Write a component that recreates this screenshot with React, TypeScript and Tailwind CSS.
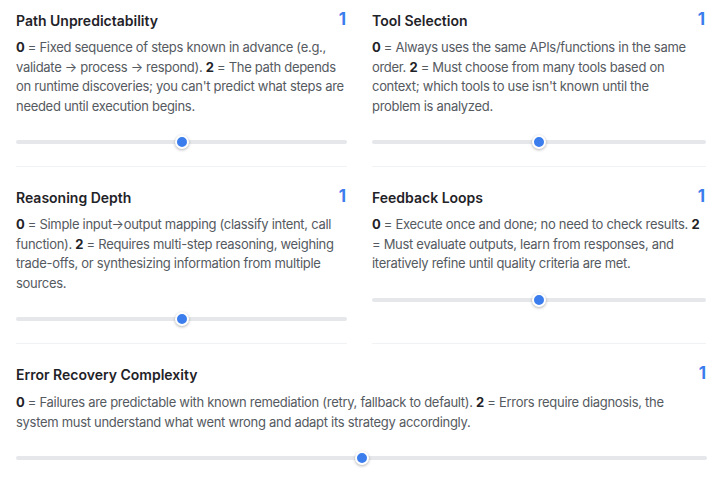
import React from "react";

type Factor = {
  title: string;
  low: string;
  high: string;
  value: number;
  descClass?: string;
};

const factors: Factor[] = [
  {
    title: "Path Unpredictability",
    low: "Fixed sequence of steps known in advance (e.g., validate → process → respond).",
    high: "The path depends on runtime discoveries; you can't predict what steps are needed until execution begins.",
    value: 1,
  },
  {
    title: "Tool Selection",
    low: "Always uses the same APIs/functions in the same order.",
    high: "Must choose from many tools based on context; which tools to use isn't known until the problem is analyzed.",
    value: 1,
    descClass: "pr-4",
  },
  {
    title: "Reasoning Depth",
    low: "Simple input→output mapping (classify intent, call function).",
    high: "Requires multi-step reasoning, weighing trade-offs, or synthesizing information from multiple sources.",
    value: 1,
  },
  {
    title: "Feedback Loops",
    low: "Execute once and done; no need to check results.",
    high: "Must evaluate outputs, learn from responses, and iteratively refine until quality criteria are met.",
    value: 1,
  },
];

const errorRecovery: Factor = {
  title: "Error Recovery Complexity",
  low: "Failures are predictable with known remediation (retry, fallback to default).",
  high: "Errors require diagnosis, the system must understand what went wrong and adapt its strategy accordingly.",
  value: 1,
  descClass: "mt-[9px] pr-5",
};

function Slider({ value }: { value: number }) {
  const pct = (value / 2) * 100;
  return (
    <div className="relative h-4 flex items-center">
      <div className="h-[4px] w-full rounded-full bg-[#e5e7eb]" />
      <div
        className="absolute top-1/2 h-[14px] w-[14px] -translate-x-1/2 -translate-y-1/2 rounded-full border-2 border-white bg-[#3b7ded] shadow-[0_1px_3px_rgba(0,0,0,0.3)]"
        style={{ left: `${pct}%` }}
      />
    </div>
  );
}

function FactorBlock({ f, border }: { f: Factor; border: boolean }) {
  return (
    <div className={`pt-[10px] pb-4 ${border ? "border-b border-[#f1f2f4]" : ""}`}>
      <div className="flex items-center justify-between h-5">
        <h3 className="text-[14px] font-semibold text-[#1f2328]">{f.title}</h3>
        <span className="text-[17px] font-bold text-[#3b7ded] pr-[1px]">{f.value}</span>
      </div>
      <p
        className={`mt-2 text-[13px] leading-[19.5px] tracking-[-0.3px] text-[#555a61] ${f.descClass ?? ""}`}
      >
        <span className="font-bold text-[#1f2328]">0</span> = {f.low}{" "}
        <span className="font-bold text-[#1f2328]">2</span> = {f.high}
      </p>
      <div className="mt-[18px]">
        <Slider value={f.value} />
      </div>
    </div>
  );
}

export default function App() {
  return (
    <div
      className="w-[723px] h-[480px] bg-white overflow-hidden px-4"
      style={{ fontFamily: "Inter, 'Noto Sans', Arial, sans-serif" }}
    >
      <div className="grid grid-cols-[331px_334px] gap-x-[25px] gap-y-[10px]">
        {factors.map((f) => (
          <FactorBlock key={f.title} f={f} border />
        ))}
      </div>
      <div className="mt-[10px]">
        <FactorBlock f={errorRecovery} border={false} />
      </div>
    </div>
  );
}
